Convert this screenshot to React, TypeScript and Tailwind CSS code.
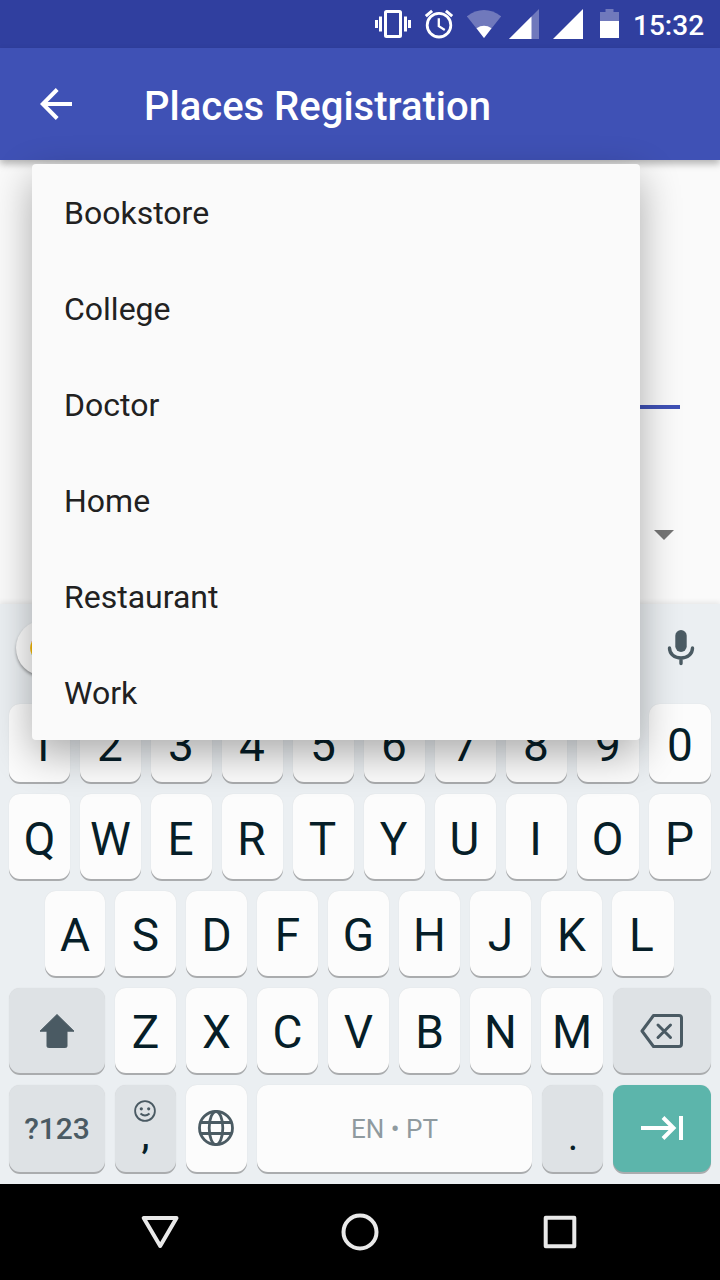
import type { ReactNode } from "react";

const places = ["Bookstore", "College", "Doctor", "Home", "Restaurant", "Work"];
const digits = "1234567890".split("");
const topLetters = "QWERTYUIOP".split("");
const homeLetters = "ASDFGHJKL".split("");
const bottomLetters = "ZXCVBNM".split("");

const keyShape = "flex items-center justify-center rounded-[11px] shadow-[0_2px_0_#aaacae,0_0_1px_rgba(0,0,0,0.12)]";

function LetterKey({ label, className = "w-[61px] pt-[2px]" }: { label: string; className?: string }) {
  return (
    <div className={`${keyShape} ${className} shrink-0 bg-[#fcfcfc] text-[46px] leading-none text-[#061e28]`}>
      {label}
    </div>
  );
}

function ActionKey({ width, children }: { width: string; children: ReactNode }) {
  return <div className={`${keyShape} ${width} shrink-0 bg-[#dee2e5] text-[#4a5a63]`}>{children}</div>;
}

function StatusBar() {
  return (
    <div className="flex h-12 shrink-0 items-center bg-[#303f9f] pl-[375px] text-white">
      <svg className="mr-3 h-12 w-9" viewBox="375 0 36 48">
        <rect x="385.5" y="11.5" width="15" height="25" rx="1" fill="none" stroke="currentColor" strokeWidth="3" />
        <path d="M376.500 20v8M380.500 16.500v15M405.500 16.500v15M409.500 20v8" stroke="currentColor" strokeWidth="3" />
      </svg>
      <svg className="mr-3 h-12 w-8" viewBox="423 0 32 48" fill="none" stroke="currentColor">
        <circle cx="439" cy="25.200" r="11.800" strokeWidth="2.800" />
        <path d="M438.800 18.200v8l6 3.700" strokeWidth="2.300" />
        <path d="m425.800 16.200 6.300-5.300M452.200 16.200l-6.300-5.300" strokeWidth="3" />
      </svg>
      <svg className="mr-1.5 h-12 w-[34px]" viewBox="467 0 34 48">
        <path d="M484 38 466.800 16.300Q475 10 484 10t17.200 6.300Z" fill="#7079bc" />
        <path d="M484 38 476.500 28.200Q484 23.500 491.500 28.200Z" fill="currentColor" />
      </svg>
      <svg className="mr-3.5 h-12 w-8" viewBox="507 0 32 48">
        <path d="M509 39 539 9v30Z" fill="#7079bc" />
        <path d="M509 39 531.500 16.500V39Z" fill="currentColor" />
      </svg>
      <svg className="mr-[17px] h-12 w-[30px]" viewBox="553 0 30 48">
        <path d="M553 39 583 9v30Z" fill="currentColor" />
      </svg>
      <svg className="mr-[14px] h-12 w-[19px]" viewBox="600 0 19 48">
        <path d="M600 12h5.500V9h8v3h5.500v10h-19Z" fill="#7079bc" />
        <path d="M600 21h19v17h-19Z" fill="currentColor" />
      </svg>
      <span className="pt-[3px] text-[28px] leading-none font-medium">15:32</span>
    </div>
  );
}

function AppBar() {
  return (
    <div className="z-10 flex h-28 shrink-0 items-center bg-[#3f51b5] pl-10 text-white shadow-[0_4px_7px_rgba(0,0,0,0.28)]">
      <svg className="mr-[72px] h-8 w-8" viewBox="0 0 32 32" fill="none" stroke="currentColor" strokeWidth="4">
        <path d="M32 16H3M17.200 1.500 2.800 16l14.400 14.500" />
      </svg>
      <h1 className="pt-[6px] text-[40px] leading-none font-medium">Places Registration</h1>
    </div>
  );
}

function Form() {
  return (
    <div className="flex h-[444px] shrink-0 flex-col items-end bg-[#fafafa] px-10 pt-[245px]">
      <div className="h-1 w-full bg-[#3f51b5]" />
      <svg className="mt-[121px] mr-[6px] h-2.5 w-5" viewBox="0 0 20 10">
        <path d="M0 0h20L10 10Z" fill="#757575" />
      </svg>
    </div>
  );
}

function Keyboard() {
  return (
    <div className="flex h-[580px] shrink-0 flex-col bg-[#ebeff2] shadow-[0_-2px_5px_rgba(0,0,0,0.08)]">
      <div className="flex h-[88px] items-center justify-between pr-[25px] pl-4">
        <div className="flex h-14 w-14 items-center justify-center rounded-full bg-[#fcfcfc] shadow-[0_2px_3px_rgba(0,0,0,0.35)]">
          <svg className="h-8 w-8" viewBox="0 0 32 32" fill="none" strokeWidth="5">
            <path d="M5.800 11A12 12 0 0 1 25 6.600" stroke="#ea4335" />
            <path d="M5.800 21a12 12 0 0 1 0-10" stroke="#fbbc05" />
            <path d="M5.800 21A12 12 0 0 0 24 26" stroke="#34a853" />
            <path d="M24 26a13 13 0 0 0 5-10H16" stroke="#4285f4" />
          </svg>
        </div>
        <svg className="h-9 w-[28px]" viewBox="0 0 28 36">
          <rect x="8.300" y="0" width="11.400" height="22" rx="5.700" fill="#4b5b63" />
          <path d="M2.500 18c0 6 5 10 11.500 10s11.500-4 11.500-10M14 28v5.500" fill="none" stroke="#4b5b63" strokeWidth="3.400" strokeLinecap="round" />
        </svg>
      </div>
      <div className="flex flex-col px-[9px] pt-3">
        <div className="mb-3 flex h-[78px] gap-2.5">
          {digits.map((c, i) => (
            <LetterKey
              key={c}
              label={c}
              className={i === 0 ? "w-[61px] pt-[4px] pl-[5px]" : i > 7 ? "w-[62px] pt-[4px]" : "w-[61px] pt-[4px] pr-px"}
            />
          ))}
        </div>
        <div className="mb-3 flex h-[85px] gap-2.5">
          {topLetters.map((c, i) => (
            <LetterKey
              key={c}
              label={c}
              className={i > 7 ? "w-[62px] pt-[4px] pr-px" : i > 1 ? "w-[61px] pt-[4px] pr-[2px]" : "w-[61px] pt-[4px]"}
            />
          ))}
        </div>
        <div className="mb-3 flex h-[85px] gap-2.5 px-9">
          {homeLetters.map((c, i) => (
            <LetterKey
              key={c}
              label={c}
              className={i === 0 ? "w-[60px] pt-[3px]" : i === 8 ? "w-[62px] pt-[3px] pr-[3px]" : "w-[61px] pt-[3px]"}
            />
          ))}
        </div>
        <div className="mb-3 flex h-[85px] gap-2.5">
          <ActionKey width="w-24">
            <svg className="h-9 w-9" viewBox="0 0 36 36">
              <path d="M18 1.500 35 18.200H28V33q0 1.500-1.500 1.500h-17Q8 34.500 8 33V18.200H1Z" fill="currentColor" stroke="currentColor" strokeWidth="1" strokeLinejoin="round" />
            </svg>
          </ActionKey>
          {bottomLetters.map((c, i) => (
            <LetterKey key={c} label={c} className={i === 6 ? "w-[62px] pt-[2px]" : "w-[61px] pt-[2px]"} />
          ))}
          <ActionKey width="w-[98px]">
            <svg className="h-9 w-11" viewBox="0 0 44 36" fill="none" stroke="currentColor" strokeWidth="3" strokeLinecap="round" strokeLinejoin="round">
              <path d="M13.500 2.500H39q2.500 0 2.500 2.500v26q0 2.500-2.500 2.500H13.500L2 18Z" />
              <path d="m18 12 12.500 12.500M30.500 12 18 24.500" />
            </svg>
          </ActionKey>
        </div>
        <div className="flex h-[87px] gap-2.5">
          <ActionKey width="w-24">
            <span className="text-[30px] leading-none font-medium">?123</span>
          </ActionKey>
          <ActionKey width="w-[61px]">
            <div className="mr-px flex flex-col items-center">
              <svg className="h-[22px] w-[22px]" viewBox="0 0 22 22">
                <circle cx="11" cy="11" r="9.900" fill="none" stroke="currentColor" strokeWidth="1.800" />
                <circle cx="7.300" cy="8.800" r="1.600" fill="currentColor" />
                <circle cx="14.700" cy="8.800" r="1.600" fill="currentColor" />
                <path d="M6.500 13.500q4.500 4 9 0" fill="none" stroke="currentColor" strokeWidth="2" />
              </svg>
              <span className="h-[35px] pl-px text-[36px] leading-[28px] font-medium text-[#061e28]">,</span>
            </div>
          </ActionKey>
          <div className={`${keyShape} w-[61px] shrink-0 bg-[#fcfcfc] pr-[2px] pb-px text-[#4b5b63]`}>
            <svg className="h-9 w-9" viewBox="0 0 36 36" fill="none" stroke="currentColor" strokeWidth="2.800">
              <circle cx="18" cy="18" r="16.500" />
              <ellipse cx="18" cy="18" rx="6.800" ry="16.500" />
              <path d="M3 12.500h30M3 23.500h30" />
            </svg>
          </div>
          <div className={`${keyShape} min-w-0 flex-1 bg-[#fcfcfc] text-[26px] leading-none text-[#8f9a9f]`}>EN • PT</div>
          <ActionKey width="w-[61px]">
            <span className="pt-[17px] pl-px text-[40px] leading-none text-[#061e28]">.</span>
          </ActionKey>
          <div className={`${keyShape} w-[98px] shrink-0 bg-[#5cb5ab] pb-px text-white`}>
            <svg className="h-7 w-11" viewBox="0 0 44 28" fill="none" stroke="currentColor" strokeWidth="4">
              <path d="M1 14h33M23 3.500 33.500 14 23 24.500M41 2v24" />
            </svg>
          </div>
        </div>
      </div>
    </div>
  );
}

function NavigationBar() {
  return (
    <div className="flex h-24 shrink-0 items-center justify-center gap-40 bg-black text-[#e9e9e9]">
      <svg className="h-10 w-10" viewBox="0 0 40 40" fill="none" stroke="currentColor" strokeWidth="4" strokeLinejoin="round">
        <path d="M3.700 6h32.800L20.200 34Z" />
      </svg>
      <svg className="h-10 w-10" viewBox="0 0 40 40" fill="none" stroke="currentColor" strokeWidth="4">
        <circle cx="20" cy="20" r="16.500" />
      </svg>
      <svg className="h-10 w-10" viewBox="0 0 40 40" fill="none" stroke="currentColor" strokeWidth="4" strokeLinejoin="round">
        <rect x="5.700" y="5.700" width="28.600" height="28.600" />
      </svg>
    </div>
  );
}

export default function App() {
  return (
    <div className="relative flex h-[1280px] w-[720px] flex-col overflow-hidden bg-[#fafafa] font-[Roboto,sans-serif]">
      <StatusBar />
      <AppBar />
      <Form />
      <Keyboard />
      <NavigationBar />
      <ul className="absolute top-[164px] left-8 z-20 w-[608px] rounded bg-[#fafafa] text-[32px] text-[#212121] shadow-[0_14px_40px_rgba(0,0,0,0.32)]">
        {places.map((place) => (
          <li key={place} className="flex h-24 items-center px-8 pt-[2px] leading-none">{place}</li>
        ))}
      </ul>
    </div>
  );
}
